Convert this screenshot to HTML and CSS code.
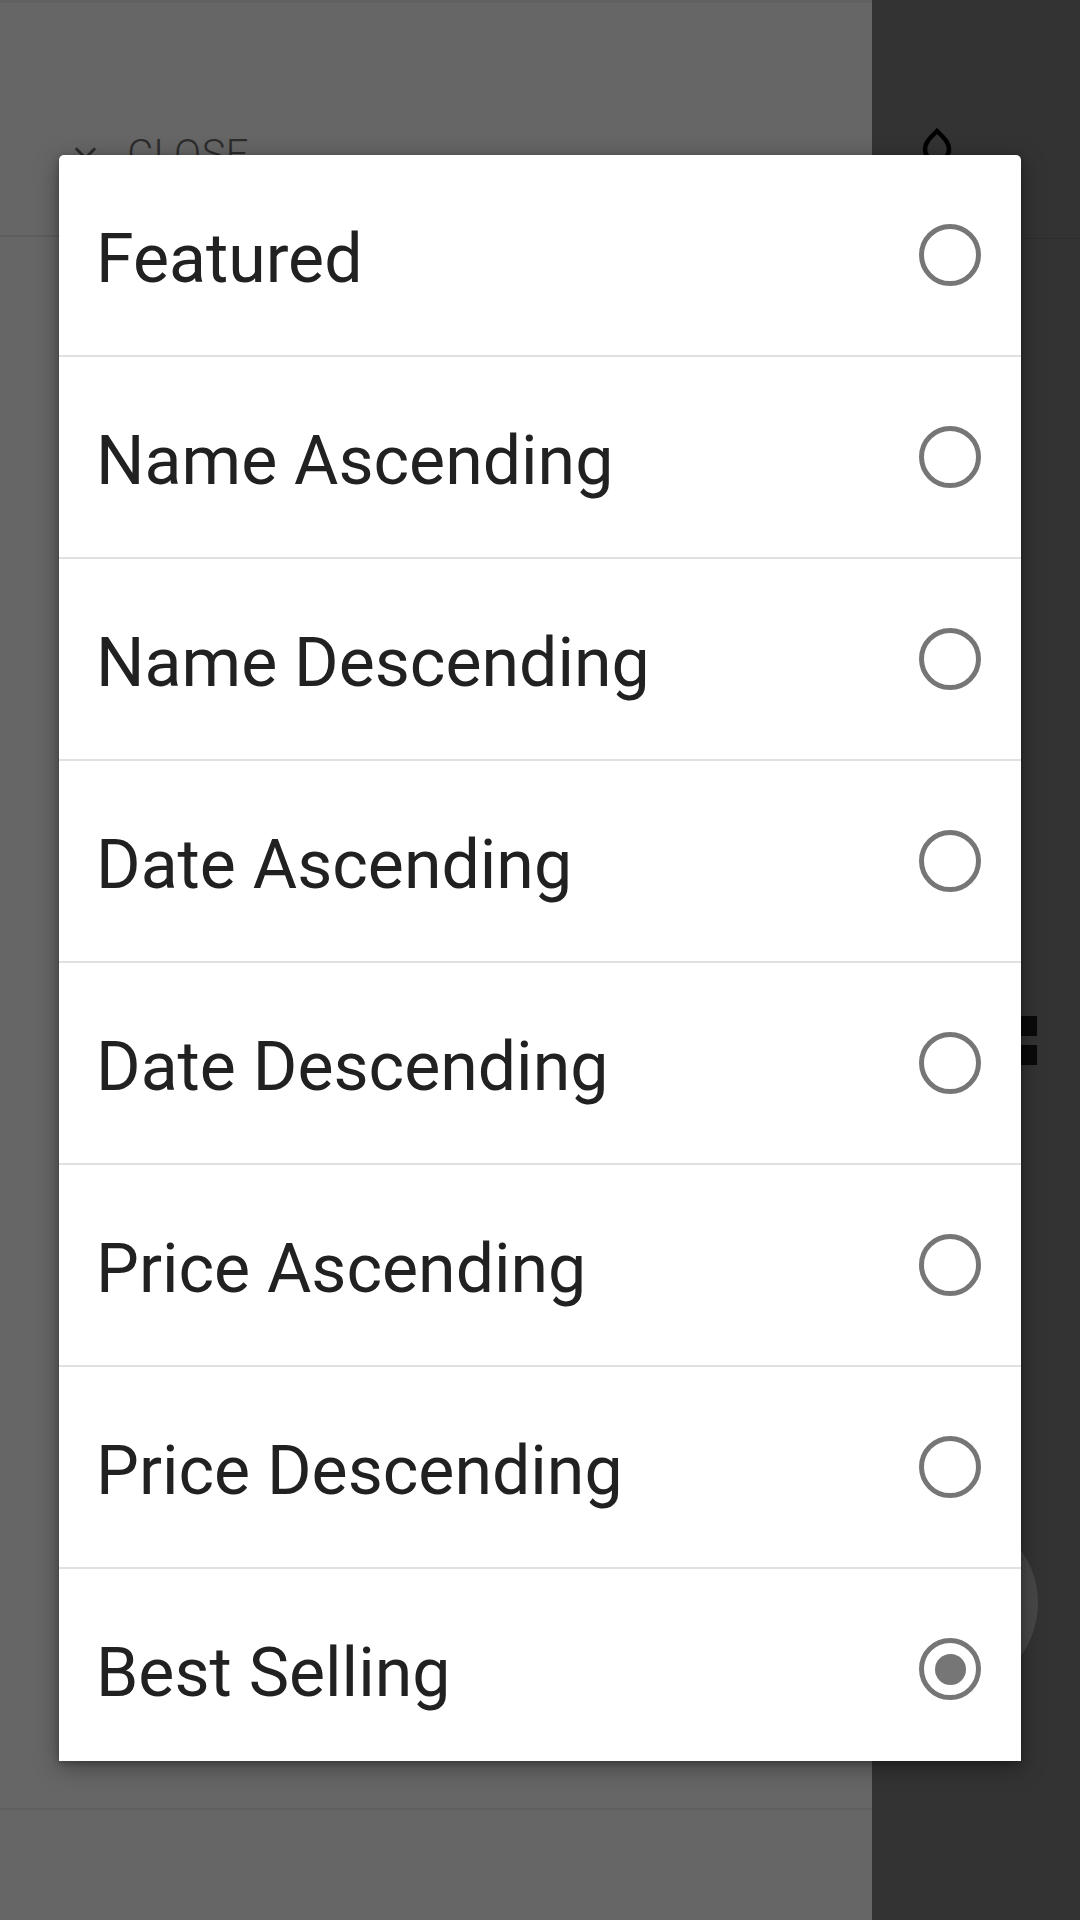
FILE: index.html
```html
<!DOCTYPE html>
<html lang="en">
<head>
<meta charset="utf-8">
<title>Sort</title>
<link rel="stylesheet" href="styles.css">
</head>
<body>
<div class="page">
  <div class="main">
    <div class="header">
      <div class="close"><span class="close-x">×</span><span class="close-label">CLOSE</span></div>
    </div>
    <div class="main-body"></div>
    <div class="footer-line"></div>
  </div>
  <div class="side">
    <div class="side-header">
      <svg class="user-icon" width="40" height="60" viewBox="0 0 40 60"><path d="M20 3 C14 9 8 14 8 21 C8 28 13 32 20 32 C27 32 32 28 32 21 C32 14 26 9 20 3 Z" fill="none" stroke="#000" stroke-width="4.5"/></svg>
    </div>
    <div class="side-body"></div>
  </div>
</div>

<div class="toggle-icon"><span class="sq"></span><span class="sq"></span></div>
<div class="fab"></div>

<div class="dialog">
  <div class="option"><span class="label">Featured</span><span class="radio"></span></div>
  <div class="option"><span class="label">Name Ascending</span><span class="radio"></span></div>
  <div class="option"><span class="label">Name Descending</span><span class="radio"></span></div>
  <div class="option"><span class="label">Date Ascending</span><span class="radio"></span></div>
  <div class="option"><span class="label">Date Descending</span><span class="radio"></span></div>
  <div class="option"><span class="label">Price Ascending</span><span class="radio"></span></div>
  <div class="option"><span class="label">Price Descending</span><span class="radio"></span></div>
  <div class="option"><span class="label">Best Selling</span><span class="radio checked"></span></div>
</div>
</body>
</html>
```

FILE: styles.css
```css
* { box-sizing: border-box; }
html, body {
  margin: 0;
  padding: 0;
  width: 1080px;
  height: 1920px;
  overflow: hidden;
  background: #666666;
  font-family: Roboto, "Noto Sans", sans-serif;
}
.page {
  display: flex;
  width: 1080px;
  height: 1920px;
}
.main {
  width: 872px;
  height: 1920px;
  background: #666666;
  display: flex;
  flex-direction: column;
}
.header {
  height: 237px;
  border-bottom: 2px solid #5e5e5e;
  padding: 128px 0 0 72px;
  border-top: 3px solid #606060;
}
.close {
  display: flex;
  align-items: center;
  gap: 28px;
  color: #2c2c2c;
  font-weight: 300;
  font-size: 40px;
  line-height: 48px;
}
.close-x { font-size: 52px; font-weight: 300; }
.close-label { letter-spacing: 0.5px; }
.main-body { height: 1571px; }
.footer-line { border-top: 2px solid #5e5e5e; flex: 1; }
.side {
  flex: 1;
  background: #333333;
  display: flex;
  flex-direction: column;
}
.side-header {
  height: 239px;
  border-bottom: 1px solid #2e2e2e;
  padding: 128px 0 0 45px;
}
.user-icon { display: block; }
.side-body { flex: 1; }

.toggle-icon {
  position: absolute;
  left: 1015px;
  top: 1016px;
  display: flex;
  flex-direction: column;
  gap: 9px;
}
.sq {
  display: block;
  width: 22px;
  height: 20px;
  background: #0a0a0a;
}
.fab {
  position: absolute;
  left: 856px;
  top: 1512px;
  width: 182px;
  height: 182px;
  border-radius: 50%;
  background: radial-gradient(circle at 50% 50%, #4a4a4a 60%, #3c3c3c 100%);
}

.dialog {
  position: absolute;
  left: 59px;
  top: 155px;
  width: 962px;
  height: 1606px;
  overflow: hidden;
  background: #ffffff;
  border-radius: 5px 5px 0 0;
  box-shadow: 0 6px 24px rgba(0,0,0,0.35), 0 2px 6px rgba(0,0,0,0.25);
}
.option {
  height: 202px;
  flex-shrink: 0;
  border-bottom: 2px solid #e0e0e0;
  display: flex;
  align-items: center;
  justify-content: space-between;
  padding: 7px 40px 0 37px;
}
.label {
  font-size: 68px;
  color: #212121;
  line-height: 80px;
}
.radio {
  width: 62px;
  height: 62px;
  margin-top: -7px;
  border: 5px solid #767676;
  border-radius: 50%;
  display: flex;
  align-items: center;
  justify-content: center;
}
.radio.checked::after {
  content: "";
  width: 31px;
  height: 31px;
  border-radius: 50%;
  background: #767676;
}
```
